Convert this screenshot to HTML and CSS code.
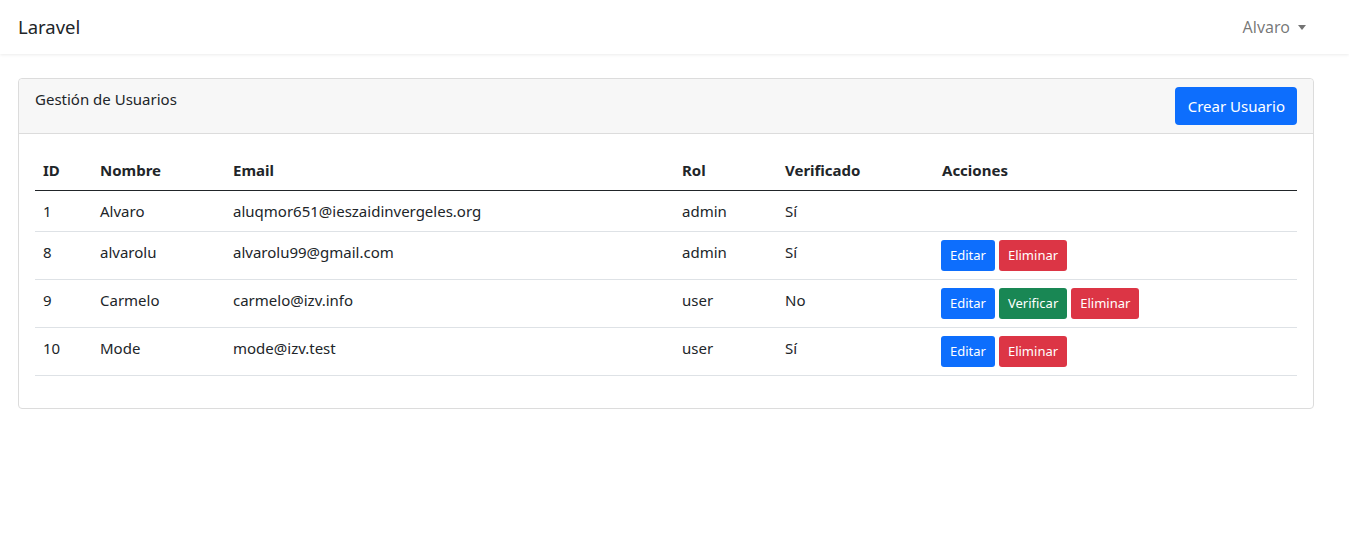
FILE: index.html
```html
<!DOCTYPE html>
<html lang="es">
<head>
<meta charset="utf-8">
<title>Laravel</title>
<link rel="stylesheet" href="styles.css">
</head>
<body>
<nav class="navbar">
  <a class="brand" href="#">Laravel</a>
  <a class="user" href="#">Alvaro <span class="caret"></span></a>
</nav>
<main class="main">
  <div class="card">
    <div class="card-header">
      <span class="title">Gestión de Usuarios</span>
      <a class="btn btn-primary" href="#">Crear Usuario</a>
    </div>
    <div class="card-body">
      <table class="table">
        <thead>
          <tr>
            <th class="c1">ID</th>
            <th class="c2">Nombre</th>
            <th class="c3">Email</th>
            <th class="c4">Rol</th>
            <th class="c5">Verificado</th>
            <th class="c6">Acciones</th>
          </tr>
        </thead>
        <tbody>
          <tr>
            <td>1</td><td>Alvaro</td><td>aluqmor651@ieszaidinvergeles.org</td><td>admin</td><td>Sí</td><td></td>
          </tr>
          <tr>
            <td>8</td><td>alvarolu</td><td>alvarolu99@gmail.com</td><td>admin</td><td>Sí</td>
            <td><div class="actions"><a class="btn-sm btn-primary" href="#">Editar</a><a class="btn-sm btn-danger" href="#">Eliminar</a></div></td>
          </tr>
          <tr>
            <td>9</td><td>Carmelo</td><td>carmelo@izv.info</td><td>user</td><td>No</td>
            <td><div class="actions"><a class="btn-sm btn-primary" href="#">Editar</a><a class="btn-sm btn-success" href="#">Verificar</a><a class="btn-sm btn-danger" href="#">Eliminar</a></div></td>
          </tr>
          <tr>
            <td>10</td><td>Mode</td><td>mode@izv.test</td><td>user</td><td>Sí</td>
            <td><div class="actions"><a class="btn-sm btn-primary" href="#">Editar</a><a class="btn-sm btn-danger" href="#">Eliminar</a></div></td>
          </tr>
        </tbody>
      </table>
    </div>
  </div>
</main>
</body>
</html>
```
FILE: styles.css
```css
* { box-sizing: border-box; }
html, body { margin: 0; padding: 0; }
body {
  font-family: "Noto Sans", "Open Sans", sans-serif;
  font-size: 16px;
  line-height: 24px;
  color: #212529;
  background: #fff;
}
a { text-decoration: none; }

.navbar {
  height: 54px;
  display: flex;
  align-items: center;
  justify-content: space-between;
  padding: 0 43px 0 18px;
  background: #fff;
  box-shadow: 0 1px 3px rgba(0,0,0,0.08);
}
.brand {
  font-size: 18.5px;
  color: #212529;
}
.user {
  color: rgba(0,0,0,0.55);
  display: flex;
  align-items: center;
  gap: 8px;
}
.caret {
  width: 0; height: 0;
  border-left: 4px solid transparent;
  border-right: 4px solid transparent;
  border-top: 5px solid rgba(0,0,0,0.55);
}

.main {
  padding: 24px 35px 0 18px;
}
.card {
  border: 1px solid #dcdcdc;
  border-radius: 4px;
  background: #fff;
}
.card-header {
  display: flex;
  justify-content: space-between;
  padding: 8px 16px;
  background: #f7f7f7;
  border-bottom: 1px solid #dcdcdc;
  border-radius: 4px 4px 0 0;
}
.title { font-size: 15px; }
.btn {
  display: inline-block;
  padding: 7px 12px 7px 13px;
  line-height: 24px;
  font-size: 15px;
  border-radius: 4px;
  color: #fff;
}
.card-body { padding: 16px; }

.table {
  width: 100%;
  border-collapse: collapse;
  margin-bottom: 16px;
  font-size: 15px;
}
.table th, .table td {
  text-align: left;
  vertical-align: top;
  padding: 8px;
  border-bottom: 1px solid #dee2e6;
}
.table th {
  font-weight: 700;
  border-bottom: 1px solid #212529;
}
.c1 { width: 57px; }
.c2 { width: 133px; }
.c3 { width: 449px; }
.c4 { width: 103px; }
.c5 { width: 157px; }

.actions { display: flex; gap: 4px; margin-left: -1px; }
.btn-sm {
  display: inline-block;
  padding: 5px 9px;
  font-size: 13px;
  line-height: 21px;
  border-radius: 3px;
  color: #fff;
}
.btn-primary { background: #0d6efd; }
.btn-success { background: #198754; }
.btn-danger { background: #dc3545; }
```
